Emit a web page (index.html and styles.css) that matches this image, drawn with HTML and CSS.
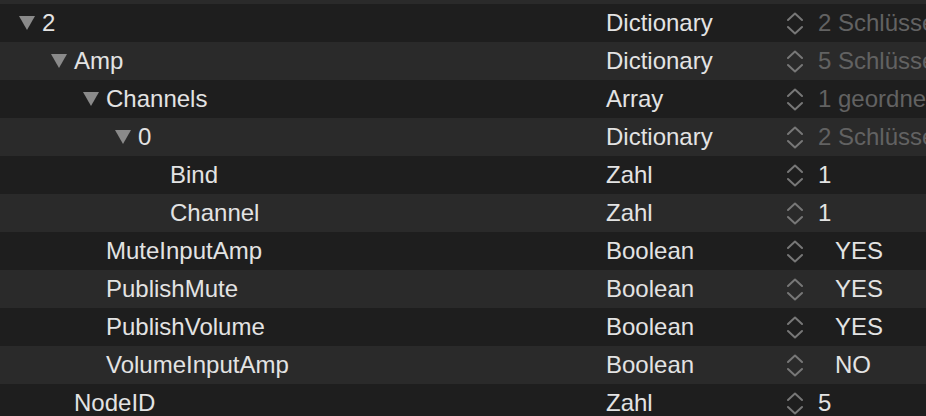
FILE: index.html
```html
<!DOCTYPE html>
<html>
<head>
<meta charset="utf-8">
<link rel="stylesheet" href="styles.css">
</head>
<body>
<div class="table">
  <div class="row dark">
    <div class="key l0"><svg class="tri" width="16" height="14" viewBox="0 0 16 14"><polygon points="0,0 16,0 8,14"/></svg><span>2</span></div>
    <div class="type">Dictionary</div>
    <svg class="step" width="16" height="23" viewBox="0 0 16 23"><polyline points="1,8 8,1.5 15,8"/><polyline points="1,15 8,21.5 15,15"/></svg>
    <div class="val muted">2 Schlüssel/Wert-Paare</div>
  </div>
  <div class="row light">
    <div class="key l1"><svg class="tri" width="16" height="14" viewBox="0 0 16 14"><polygon points="0,0 16,0 8,14"/></svg><span>Amp</span></div>
    <div class="type">Dictionary</div>
    <svg class="step" width="16" height="23" viewBox="0 0 16 23"><polyline points="1,8 8,1.5 15,8"/><polyline points="1,15 8,21.5 15,15"/></svg>
    <div class="val muted">5 Schlüssel/Wert-Paare</div>
  </div>
  <div class="row dark">
    <div class="key l2"><svg class="tri" width="16" height="14" viewBox="0 0 16 14"><polygon points="0,0 16,0 8,14"/></svg><span>Channels</span></div>
    <div class="type">Array</div>
    <svg class="step" width="16" height="23" viewBox="0 0 16 23"><polyline points="1,8 8,1.5 15,8"/><polyline points="1,15 8,21.5 15,15"/></svg>
    <div class="val muted">1 geordnetes Element</div>
  </div>
  <div class="row light">
    <div class="key l3"><svg class="tri" width="16" height="14" viewBox="0 0 16 14"><polygon points="0,0 16,0 8,14"/></svg><span>0</span></div>
    <div class="type">Dictionary</div>
    <svg class="step" width="16" height="23" viewBox="0 0 16 23"><polyline points="1,8 8,1.5 15,8"/><polyline points="1,15 8,21.5 15,15"/></svg>
    <div class="val muted">2 Schlüssel/Wert-Paare</div>
  </div>
  <div class="row dark">
    <div class="key l4 leaf"><span>Bind</span></div>
    <div class="type">Zahl</div>
    <svg class="step" width="16" height="23" viewBox="0 0 16 23"><polyline points="1,8 8,1.5 15,8"/><polyline points="1,15 8,21.5 15,15"/></svg>
    <div class="val num">1</div>
  </div>
  <div class="row light">
    <div class="key l4 leaf"><span>Channel</span></div>
    <div class="type">Zahl</div>
    <svg class="step" width="16" height="23" viewBox="0 0 16 23"><polyline points="1,8 8,1.5 15,8"/><polyline points="1,15 8,21.5 15,15"/></svg>
    <div class="val num">1</div>
  </div>
  <div class="row dark">
    <div class="key l2 leaf"><span>MuteInputAmp</span></div>
    <div class="type">Boolean</div>
    <svg class="step" width="16" height="23" viewBox="0 0 16 23"><polyline points="1,8 8,1.5 15,8"/><polyline points="1,15 8,21.5 15,15"/></svg>
    <div class="val bool">YES</div>
  </div>
  <div class="row light">
    <div class="key l2 leaf"><span>PublishMute</span></div>
    <div class="type">Boolean</div>
    <svg class="step" width="16" height="23" viewBox="0 0 16 23"><polyline points="1,8 8,1.5 15,8"/><polyline points="1,15 8,21.5 15,15"/></svg>
    <div class="val bool">YES</div>
  </div>
  <div class="row dark">
    <div class="key l2 leaf"><span>PublishVolume</span></div>
    <div class="type">Boolean</div>
    <svg class="step" width="16" height="23" viewBox="0 0 16 23"><polyline points="1,8 8,1.5 15,8"/><polyline points="1,15 8,21.5 15,15"/></svg>
    <div class="val bool">YES</div>
  </div>
  <div class="row light">
    <div class="key l2 leaf"><span>VolumeInputAmp</span></div>
    <div class="type">Boolean</div>
    <svg class="step" width="16" height="23" viewBox="0 0 16 23"><polyline points="1,8 8,1.5 15,8"/><polyline points="1,15 8,21.5 15,15"/></svg>
    <div class="val bool">NO</div>
  </div>
  <div class="row dark">
    <div class="key l1 leaf"><span>NodeID</span></div>
    <div class="type">Zahl</div>
    <svg class="step" width="16" height="23" viewBox="0 0 16 23"><polyline points="1,8 8,1.5 15,8"/><polyline points="1,15 8,21.5 15,15"/></svg>
    <div class="val num">5</div>
  </div>
</div>
</body>
</html>
```
FILE: styles.css
```css
html, body {
  margin: 0;
  padding: 0;
  background: #1e1e1e;
  overflow: hidden;
}
body {
  width: 926px;
  height: 416px;
  font-family: "Liberation Sans", Arial, sans-serif;
  font-size: 24px;
  color: #e3e3e3;
}
.table {
  display: flex;
  flex-direction: column;
  padding-top: 4px;
  background: #2a2a2a;
}
.row {
  display: grid;
  grid-template-columns: 590px 197px 16px 1fr;
  align-items: center;
  height: 38px;
  line-height: 38px;
  white-space: nowrap;
}
.row.dark { background: #1e1e1e; }
.row.light { background: #2a2a2a; }
.key {
  display: flex;
  align-items: center;
  gap: 7px;
}
.tri { fill: #8a8a8a; flex: none; }
.l0 { padding-left: 19px; }
.l1 { padding-left: 51px; }
.l2 { padding-left: 83px; }
.l3 { padding-left: 115px; }
.l4 { padding-left: 147px; }
.key.leaf { margin-left: 23px; }
.type { padding-left: 16px; }
.step {
  fill: none;
  stroke: #777777;
  stroke-width: 2;
  stroke-linecap: round;
  stroke-linejoin: round;
}
.val {
  padding-left: 15px;
  overflow: hidden;
}
.val.muted { color: #626262; }
.val.bool { padding-left: 32px; }
```
